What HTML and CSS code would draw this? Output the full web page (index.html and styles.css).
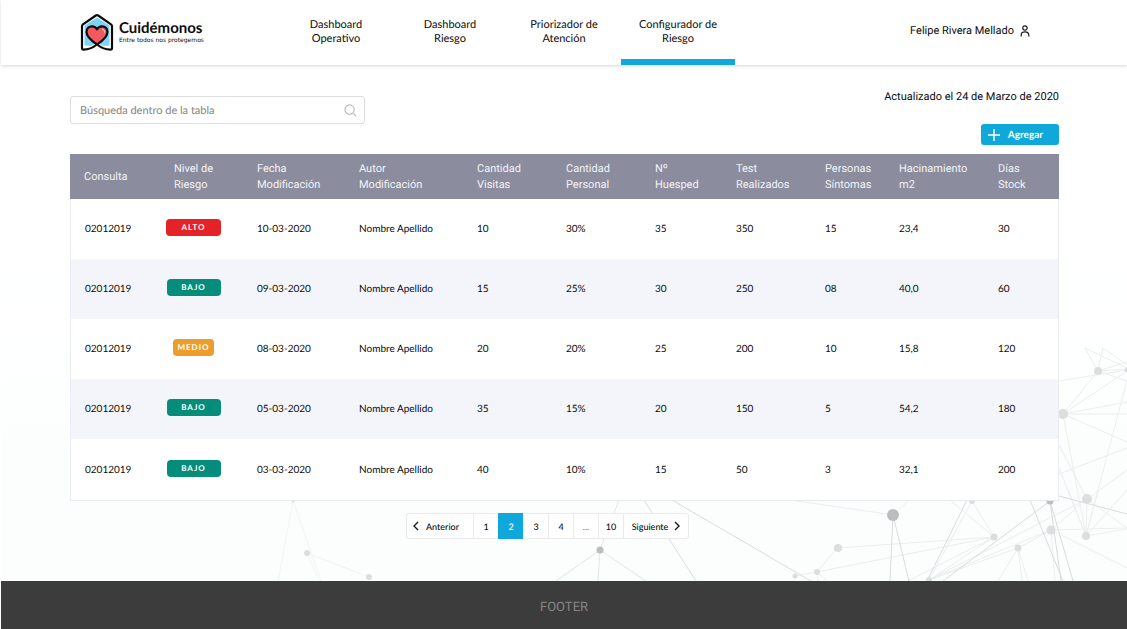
FILE: index.html
```html
<!DOCTYPE html>
<html lang="es">
<head>
<meta charset="utf-8">
<meta name="viewport" content="width=device-width, initial-scale=1">
<title>Cuidémonos - Configurador de Riesgo</title>
<link rel="stylesheet" href="styles.css">
</head>
<body>
<div class="page">
  <header class="header">
    <a class="brand" href="#">
      <svg class="brand-mark" viewBox="0 0 34 38" aria-hidden="true">
        <path d="M17 4.500 29.500 12.500V32.500L24 33 17 30 10 33 4.500 32.500V12.500Z" fill="#7fd3f5"/>
        <path d="M17 31.500C11 27.500 6.500 23.500 6.500 19C6.500 15.500 9 13.300 12 13.300C14.200 13.300 16 14.400 17 16.300C18 14.400 19.800 13.300 22 13.300C25 13.300 27.500 15.500 27.500 19C27.500 23.500 23 27.500 17 31.500Z" fill="#f4595f"/>
        <path d="M17 31.500C11 27.500 6.500 23.500 6.500 19C6.500 15.500 9 13.300 12 13.300C14.200 13.300 16 14.400 17 16.300C18 14.400 19.800 13.300 22 13.300C25 13.300 27.500 15.500 27.500 19C27.500 23.500 23 27.500 17 31.500C12.500 35 8 36.600 3.500 36.600Q2 36.600 2 35V13Q2 12 3 11.300L15.800 2.500Q17 1.700 18.200 2.500L31 11.300Q32 12 32 13V35Q32 36.600 30.500 36.600C26 36.600 21.500 35 17 31.500" fill="none" stroke="#0b0b0b" stroke-width="2.200" stroke-linejoin="round" stroke-linecap="round"/>
        <path d="M22.500 16.200C24 16.700 24.600 17.700 24.600 19.200" fill="none" stroke="#fff" stroke-width="1" stroke-linecap="round"/>
      </svg>
      <span class="brand-text">
        <span class="brand-name">Cuidémonos</span>
        <span class="brand-tagline">Entre todos nos protegemos</span>
      </span>
    </a>
    <nav class="nav">
      <a class="nav-link" href="#">Dashboard Operativo</a>
      <a class="nav-link" href="#">Dashboard Riesgo</a>
      <a class="nav-link" href="#">Priorizador de Atención</a>
      <a class="nav-link nav-link-active" href="#" aria-current="page">Configurador de Riesgo</a>
    </nav>
    <a class="user" href="#">
      <span>Felipe Rivera Mellado</span>
      <svg class="user-icon" viewBox="0 0 10 12" aria-hidden="true">
        <circle cx="5" cy="3" r="2.200"/><path d="M1.200 11.500V10C1.200 7.800 2.600 6.800 5 6.800S8.800 7.800 8.800 10V11.500"/>
      </svg>
    </a>
  </header>

  <main class="main">
    <svg class="network" viewBox="240 340 887 241" aria-hidden="true">
      <path class="net-line" d="M293 501 278 581M293 501 321 581M307 553 369 577M307 553 319 581"/>
      <path class="net-line net-line-mid" d="M893 515 790 500M893 515 909 500M837 548 817 572 994 537M837 548 994 537M795 576 817 572 818 581M817 572 827 581M972 501 929 580M972 501 994 537M950 500 994 537M929 580 994 537M929 580 1018 548M929 580 1051 530 1087 499M929 580 1087 499M908 581 994 537M1018 548 1051 530M1018 548 998 581M1018 548 1022 581M1018 548 1028 581M1051 530 1127 528M1051 530 1127 568M1051 530 1055 581M1086 536 1087 499M1086 536 1068 490M1086 536 1127 529M1087 499 1127 528M1086 536 1098 490M1098 371 1063 414M1098 371 1127 369M1098 371 1127 381M1098 371 1127 362M1098 371 1085 348 1127 368M1103 348 1127 365M1103 348 1098 371M1063 414 1127 371M1063 414 1127 402M1063 414H1127M1063 414 1127 442M1063 414 1086 536M1059 381 1127 370M1127 380 1086 536M1059 445 1087 499M1059 468 1086 536M1059 474 1127 448M1086 536 1127 490M1087 499 1127 470"/>
      <path class="net-line net-line-soft" d="M600 550 556 581M600 550 598 581M600 550 646 581M600 550 619 500"/>
      <path class="net-line net-line-dark" d="M672 500 811 581M644 500 696 581M893 515 890 581M893 515 909 581M967 500 927 581M1050 501 943 581M1050 501 1061 581M1050 501 1073 581M1030 500 1063 581M1059 496 1127 514"/>
      <g class="net-node">
        <circle cx="293" cy="501" r="1.500"/><circle cx="307" cy="553" r="3"/><circle cx="369" cy="577" r="3"/>
        <circle cx="838" cy="548" r="4"/><circle cx="817" cy="572" r="3"/><circle cx="795" cy="576" r="2.500"/>
        <circle cx="972" cy="501" r="3"/><circle cx="994" cy="537" r="3.500"/><circle cx="929" cy="580" r="3"/>
        <circle cx="1018" cy="548" r="3.500"/><circle cx="1051" cy="530" r="4.500"/><circle cx="1087" cy="499" r="5"/>
        <circle cx="1086" cy="536" r="4"/><circle cx="1098" cy="371" r="4"/><circle cx="1127" cy="370" r="2.500"/><circle cx="1063" cy="414" r="5"/>
      </g>
      <g class="net-node-dark"><circle cx="600" cy="550" r="3.500"/><circle cx="893" cy="515" r="6"/><circle cx="1050" cy="501" r="3.500"/></g>
    </svg>

    <div class="toolbar">
      <form class="search" role="search">
        <input class="search-input" type="search" placeholder="Búsqueda dentro de la tabla" aria-label="Búsqueda dentro de la tabla">
        <svg class="search-icon" viewBox="0 0 14 14" aria-hidden="true"><circle cx="6" cy="6" r="5"/><path d="M10 10 13 13"/></svg>
      </form>
      <div class="actions">
        <p class="updated">Actualizado el 24 de Marzo de 2020</p>
        <button class="add-button" type="button">
          <svg class="add-icon" viewBox="0 0 14 14" aria-hidden="true"><path d="M7 1V13M1 7H13"/></svg>
          Agregar
        </button>
      </div>
    </div>

    <table class="table">
      <colgroup>
        <col class="col-consulta"><col class="col-nivel"><col class="col-fecha"><col class="col-autor"><col class="col-mid"><col class="col-mid"><col class="col-huesped"><col class="col-mid"><col class="col-personas"><col class="col-m2"><col class="col-stock">
      </colgroup>
      <thead>
        <tr><th scope="col">Consulta</th><th scope="col">Nivel de<br>Riesgo</th><th scope="col">Fecha<br>Modificación</th><th scope="col">Autor<br>Modificación</th><th scope="col">Cantidad<br>Visitas</th><th scope="col">Cantidad<br>Personal</th><th scope="col">Nº<br>Huesped</th><th scope="col">Test<br>Realizados</th><th scope="col">Personas<br>Síntomas</th><th scope="col">Hacinamiento<br>m2</th><th scope="col">Días<br>Stock</th></tr>
      </thead>
      <tbody>
        <tr><td>02012019</td><td><div class="level"><span class="badge badge-alto">ALTO</span></div></td><td>10-03-2020</td><td>Nombre Apellido</td><td>10</td><td>30%</td><td>35</td><td>350</td><td>15</td><td>23,4</td><td>30</td></tr>
        <tr><td>02012019</td><td><div class="level"><span class="badge badge-bajo">BAJO</span></div></td><td>09-03-2020</td><td>Nombre Apellido</td><td>15</td><td>25%</td><td>30</td><td>250</td><td>08</td><td>40,0</td><td>60</td></tr>
        <tr><td>02012019</td><td><div class="level"><span class="badge badge-medio">MEDIO</span></div></td><td>08-03-2020</td><td>Nombre Apellido</td><td>20</td><td>20%</td><td>25</td><td>200</td><td>10</td><td>15,8</td><td>120</td></tr>
        <tr><td>02012019</td><td><div class="level"><span class="badge badge-bajo">BAJO</span></div></td><td>05-03-2020</td><td>Nombre Apellido</td><td>35</td><td>15%</td><td>20</td><td>150</td><td>5</td><td>54,2</td><td>180</td></tr>
        <tr><td>02012019</td><td><div class="level"><span class="badge badge-bajo">BAJO</span></div></td><td>03-03-2020</td><td>Nombre Apellido</td><td>40</td><td>10%</td><td>15</td><td>50</td><td>3</td><td>32,1</td><td>200</td></tr>
      </tbody>
    </table>

    <nav class="pagination" aria-label="Paginación">
      <button class="page-button page-prev" type="button"><svg class="chevron" viewBox="0 0 6 10" aria-hidden="true"><path d="M5 1 1 5 5 9"/></svg>Anterior</button>
      <button class="page-button" type="button">1</button>
      <button class="page-button page-current" type="button" aria-current="page">2</button>
      <button class="page-button" type="button">3</button>
      <button class="page-button" type="button">4</button>
      <span class="page-button page-gap">...</span>
      <button class="page-button" type="button">10</button>
      <button class="page-button page-next" type="button">Siguiente<svg class="chevron" viewBox="0 0 6 10" aria-hidden="true"><path d="M1 1 5 5 1 9"/></svg></button>
    </nav>
  </main>

  <footer class="footer">FOOTER</footer>
</div>
</body>
</html>
```
FILE: styles.css
```css
* {
  box-sizing: border-box;
}

body {
  margin: 0;
  background: #fff;
  color: #0c0c0c;
  font-family: Lato, "Liberation Sans", sans-serif;
  font-size: 11px;
  text-rendering: geometricPrecision;
}

a {
  color: inherit;
  text-decoration: none;
}

button,
input {
  font-family: inherit;
  color: inherit;
  text-rendering: inherit;
}

svg {
  flex: none;
}

.page {
  display: flex;
  flex-direction: column;
  min-height: 100vh;
  padding-left: 1px;
}

.header {
  position: relative;
  z-index: 1;
  display: flex;
  align-items: stretch;
  min-height: 65px;
  padding: 0 97px 0 79px;
  background: #fff;
  box-shadow: 0 1px 3px rgba(0, 0, 0, 0.16);
}

.brand {
  display: flex;
  align-items: center;
  gap: 5px;
  width: 199px;
  padding-bottom: 2px;
}

.brand-mark {
  width: 34px;
  height: 38px;
}

.brand-text {
  display: flex;
  flex-direction: column;
}

.brand-name {
  font-size: 15px;
  font-weight: 700;
  line-height: 18px;
}

.brand-tagline {
  font-family: "DejaVu Sans", sans-serif;
  font-size: 6px;
  line-height: 8px;
  white-space: nowrap;
}

.nav {
  display: flex;
}

.nav-link {
  width: 114px;
  padding: 18px 14px 13px;
  border-bottom: 6px solid transparent;
  line-height: 14px;
  text-align: center;
}

.nav-link-active {
  border-bottom-color: #10a8db;
}

.user {
  display: flex;
  align-items: center;
  gap: 6px;
  margin-left: auto;
  padding-bottom: 4px;
  font-family: Roboto, sans-serif;
  white-space: nowrap;
}

.user-icon {
  width: 10px;
  height: 12px;
  fill: none;
  stroke: #1b1b1b;
  stroke-width: 1.2;
}

.main {
  position: relative;
  flex: 1;
  padding: 25px 68px 42px 69px;
  background: linear-gradient(#fff, #fff 200px, #fcfefe 400px);
}

.network {
  position: absolute;
  right: 0;
  bottom: 0;
  width: 887px;
  height: 241px;
}

.net-line {
  fill: none;
  stroke: #f2f4f4;
  stroke-width: 1;
}

.net-line-mid {
  stroke: #ebedee;
}

.net-line-soft {
  stroke: #e2e5e5;
}

.net-line-dark {
  stroke: #d9dbdc;
}

.net-node {
  fill: #dcddde;
}

.net-node-dark {
  fill: #bbbebf;
}

.toolbar,
.table,
.pagination {
  position: relative;
}

.toolbar {
  display: flex;
  justify-content: space-between;
  margin-bottom: 9px;
}

.search {
  display: flex;
  align-items: center;
  width: 295px;
  height: 28px;
  margin-top: 6px;
  padding: 0 7px 0 9px;
  border: 1px solid #dedede;
  border-radius: 3px;
  background: #fff;
}

.search-input {
  flex: 1;
  min-width: 0;
  padding: 0;
  border: 0;
  outline: 0;
  background: none;
  font-size: 11px;
  appearance: none;
}

.search-input::placeholder {
  color: #858585;
}

.search-icon {
  width: 13px;
  height: 13px;
  fill: none;
  stroke: #b5b5b5;
  stroke-width: 1.2;
}

.actions {
  display: flex;
  flex-direction: column;
  align-items: flex-end;
  gap: 20px;
}

.updated {
  margin: 0;
  font-family: Roboto, sans-serif;
  line-height: 14px;
}

.add-button {
  display: flex;
  align-items: center;
  gap: 7px;
  height: 21px;
  padding: 0 16px 0 6px;
  border: 0;
  border-radius: 3px;
  background: #10a8db;
  color: #fff;
  font-size: 10px;
  font-weight: 700;
}

.add-icon {
  width: 14px;
  height: 14px;
  fill: none;
  stroke: #fff;
  stroke-width: 1.4;
}

.table {
  width: 100%;
  border-collapse: separate;
  border-spacing: 0;
  table-layout: fixed;
  background: #fff;
}

.col-consulta { width: 96px; }
.col-nivel { width: 91px; }
.col-fecha { width: 102px; }
.col-autor { width: 118px; }
.col-mid { width: 89px; }
.col-huesped { width: 81px; }
.col-personas { width: 74px; }
.col-m2 { width: 99px; }
.col-stock { width: 61px; }

.table th {
  height: 45px;
  padding: 0;
  background: #8b8d9f;
  color: #f3f3f6;
  font-family: Roboto, sans-serif;
  font-size: 11px;
  font-weight: 400;
  line-height: 16px;
  text-align: left;
}

.table th:first-child,
.table td:first-child {
  padding-left: 14px;
}

.table th:nth-child(2) {
  padding-left: 8px;
}

.table td {
  height: 60px;
  padding: 0;
  font-size: 10px;
  line-height: 14px;
}

.table tbody tr:nth-child(even) {
  background: #f4f5fa;
}

.table td:first-child {
  border-left: 1px solid #eaedf5;
}

.table td:last-child {
  border-right: 1px solid #eaedf5;
}

.table tbody tr:last-child td {
  height: 62px;
  border-bottom: 1px solid #e6e9f2;
}

.level {
  display: flex;
  justify-content: center;
  width: 55px;
  margin-bottom: 3px;
}

.badge {
  width: 54px;
  border-radius: 4px;
  color: #fff;
  font-size: 8px;
  font-weight: 700;
  letter-spacing: 1px;
  line-height: 17px;
  text-align: center;
}

.badge-alto {
  width: 55px;
  background: #e52225;
}

.badge-bajo {
  background: #048d7b;
}

.badge-medio {
  width: 41px;
  background: #ec9e2c;
}

.pagination {
  display: flex;
  justify-content: center;
  height: 26px;
  margin-top: 12px;
  padding-right: 34px;
}

.page-button {
  display: flex;
  align-items: center;
  justify-content: center;
  width: 25px;
  padding: 0;
  border: 1px solid #ebebeb;
  border-right-width: 0;
  background: #fff;
  font-size: 9px;
  font-weight: 500;
}

.page-prev {
  gap: 7px;
  width: 67px;
  padding-right: 8px;
  border-radius: 3px 0 0 3px;
}

.page-next {
  gap: 6px;
  width: 66px;
  border-right-width: 1px;
  border-radius: 0 3px 3px 0;
}

.page-current {
  border-color: #10a8db;
  background: #10a8db;
  color: #fff;
}

.page-gap {
  color: #777;
}

.chevron {
  width: 6px;
  height: 10px;
  fill: none;
  stroke: #1b1b1b;
  stroke-width: 1.4;
}

.footer {
  display: flex;
  align-items: center;
  justify-content: center;
  min-height: 48px;
  padding-top: 5px;
  background: #3c3c3c;
  color: #858585;
  font-family: Roboto, sans-serif;
  font-size: 13px;
}
```
